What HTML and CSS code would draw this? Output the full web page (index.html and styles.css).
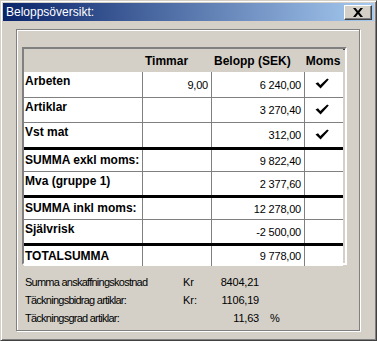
FILE: index.html
```html
<!DOCTYPE html>
<html>
<head>
<meta charset="utf-8">
<link rel="stylesheet" href="styles.css">
</head>
<body>
<div class="window">
  <div class="titlebar">
    <span class="title">Beloppsöversikt:</span>
    <div class="close">
      <svg width="10" height="9" viewBox="0 0 10 9"><path d="M0 0h2.6l2.4 3 2.4-3H10L6.4 4.5 10 9H7.4L5 6 2.6 9H0l3.6-4.5z" fill="#000"/></svg>
    </div>
  </div>
  <div class="content">
    <div class="panel">
      <div class="grid">
        <div class="row head">
          <div class="c lab"></div>
          <div class="c h">Timmar</div>
          <div class="c h">Belopp (SEK)</div>
          <div class="c h mid">Moms</div>
        </div>
        <div class="row r25 line">
          <div class="c lab">Arbeten</div>
          <div class="c num">9,00</div>
          <div class="c num">6 240,00</div>
          <div class="c chk"><svg width="14" height="11" viewBox="0 0 14 11"><path d="M0.5 5.5 L3 4.2 L5.3 7 L12.2 0.5 L13.8 1.6 L5.6 10.6 Z" fill="#000"/></svg></div>
        </div>
        <div class="row r24 line">
          <div class="c lab">Artiklar</div>
          <div class="c num"></div>
          <div class="c num">3 270,40</div>
          <div class="c chk"><svg width="14" height="11" viewBox="0 0 14 11"><path d="M0.5 5.5 L3 4.2 L5.3 7 L12.2 0.5 L13.8 1.6 L5.6 10.6 Z" fill="#000"/></svg></div>
        </div>
        <div class="row r24">
          <div class="c lab">Vst mat</div>
          <div class="c num"></div>
          <div class="c num">312,00</div>
          <div class="c chk"><svg width="14" height="11" viewBox="0 0 14 11"><path d="M0.5 5.5 L3 4.2 L5.3 7 L12.2 0.5 L13.8 1.6 L5.6 10.6 Z" fill="#000"/></svg></div>
        </div>
        <div class="row thick r21 line">
          <div class="c lab">SUMMA exkl moms:</div>
          <div class="c num"></div>
          <div class="c num">9 822,40</div>
          <div class="c"></div>
        </div>
        <div class="row r23">
          <div class="c lab">Mva (gruppe 1)</div>
          <div class="c num"></div>
          <div class="c num">2 377,60</div>
          <div class="c"></div>
        </div>
        <div class="row thick r21 line">
          <div class="c lab">SUMMA inkl moms:</div>
          <div class="c num"></div>
          <div class="c num">12 278,00</div>
          <div class="c"></div>
        </div>
        <div class="row r23">
          <div class="c lab">Självrisk</div>
          <div class="c num"></div>
          <div class="c num">-2 500,00</div>
          <div class="c"></div>
        </div>
        <div class="row thick r20">
          <div class="c lab">TOTALSUMMA</div>
          <div class="c num"></div>
          <div class="c num">9 778,00</div>
          <div class="c"></div>
        </div>
      </div>
      <div class="info">
        <div class="il">Summa anskaffningskostnad</div><div class="ik">Kr</div><div class="iv">8404,21</div><div class="ip"></div>
        <div class="il">Täckningsbidrag artiklar:</div><div class="ik">Kr:</div><div class="iv">1106,19</div><div class="ip"></div>
        <div class="il">Täckningsgrad artiklar:</div><div class="ik"></div><div class="iv">11,63</div><div class="ip">%</div>
      </div>
    </div>
  </div>
</div>
</body>
</html>
```
FILE: styles.css
```css
html, body {
  margin: 0;
  padding: 0;
  background: #d4d0c8;
}
.window {
  box-sizing: border-box;
  width: 377px;
  height: 341px;
  background: #d4d0c8;
  border: 1px solid;
  border-color: #d4d0c8 #404040 #404040 #d4d0c8;
  box-shadow: inset 1px 1px 0 #fff, inset -1px -1px 0 #808080;
  padding: 2px;
  font-family: "Liberation Sans", Arial, sans-serif;
  color: #000;
}
.titlebar {
  height: 18px;
  background: linear-gradient(to right, #0a246a, #a6caf0);
  display: flex;
  align-items: center;
  justify-content: space-between;
  padding: 0 2px 0 3px;
}
.title {
  color: #fff;
  font-size: 12px;
  line-height: 14px;
}
.close {
  box-sizing: border-box;
  width: 28px;
  height: 15px;
  background: #d4d0c8;
  border: 1px solid;
  border-color: #fff #404040 #404040 #fff;
  box-shadow: inset -1px -1px 0 #808080;
  display: flex;
  align-items: center;
  justify-content: center;
}
.content {
  padding: 8px 12px 0 13px;
}
.panel {
  box-sizing: border-box;
  width: 344px;
  height: 302px;
  border: 1px solid #808080;
  box-shadow: inset 1px 1px 0 #fff, 1px 1px 0 #fff;
  padding: 17px 12px 0 5px;
}
.grid {
  box-sizing: border-box;
  width: 325px;
  height: 218px;
  border: 2px solid;
  border-color: #808080 #fff #fff #808080;
  box-shadow: inset 1px 1px 0 #404040;
  background: #d4d0c8;
  padding: 0 2px 0 0;
}
.row {
  display: grid;
  grid-template-columns: 118px 69px 93px 39px;
  width: 319px;
  background: #fff;
}
.row.head {
  background: #d4d0c8;
  height: 23px;
}
.row.line {
  border-bottom: 1px solid #808080;
}
.row.thick {
  border-top: 3px solid #000;
}
.r25 { height: 25px; }
.r24 { height: 24px; }
.r23 { height: 23px; }
.r21 { height: 21px; }
.r20 { height: 20px; }
.c {
  font-size: 11px;
  line-height: 14px;
  border-left: 1px solid #808080;
  overflow: hidden;
  white-space: nowrap;
}
.c.lab {
  border-left: none;
  font-size: 12px;
  font-weight: bold;
  padding: 2px 0 0 1px;
}
.row.r21 .c.lab, .row.r20 .c.lab {
  padding-top: 3px;
}
.row.head .c {
  border-left: none;
}
.c.h {
  font-size: 12px;
  font-weight: bold;
  padding: 5px 0 0 3px;
}
.c.h.mid {
  text-align: center;
  padding-left: 0;
  padding-right: 1px;
}
.c.num {
  display: flex;
  align-items: center;
  justify-content: flex-end;
  padding-right: 3px;
  letter-spacing: -0.2px;
}
.c.chk {
  display: flex;
  align-items: center;
  justify-content: center;
  padding-right: 4px;
  padding-bottom: 2px;
}
.info {
  display: grid;
  grid-template-columns: 158px 30px 46px 20px;
  grid-auto-rows: 18px;
  margin-top: 8px;
  padding-left: 3px;
  font-size: 11px;
  line-height: 18px;
}
.il {
  letter-spacing: -0.75px;
}
.iv {
  text-align: right;
  letter-spacing: -0.2px;
}
.ip {
  padding-left: 11px;
}
```
